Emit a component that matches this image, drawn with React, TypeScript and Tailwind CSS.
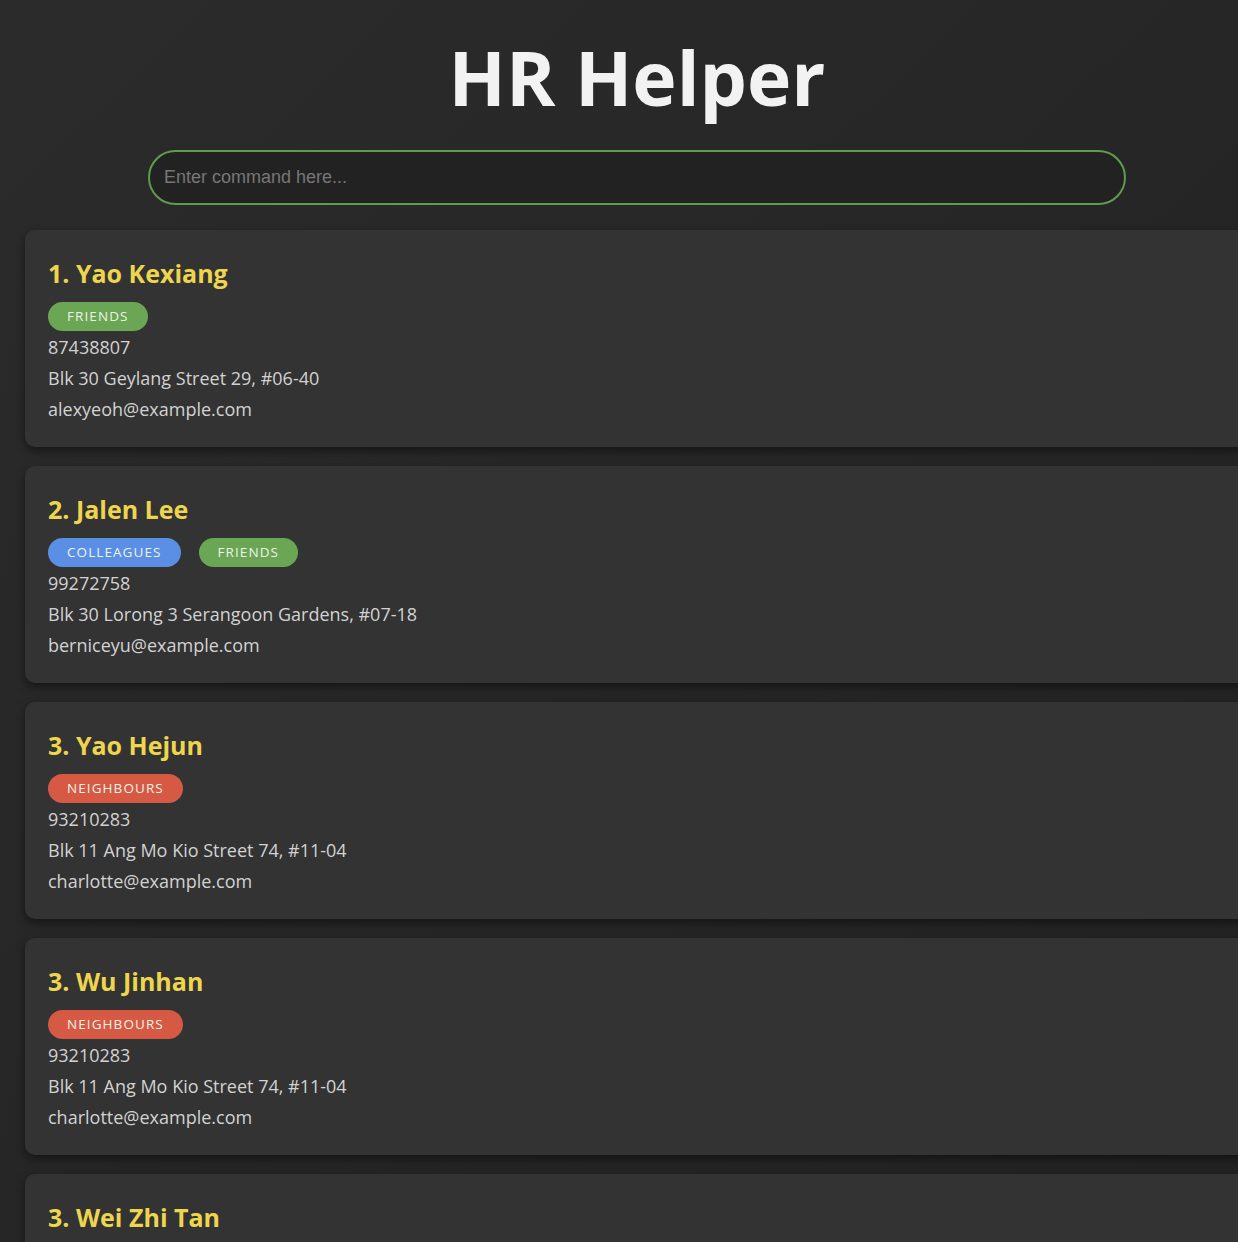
const people = [
  {
    id: 1,
    index: 1,
    name: "Yao Kexiang",
    tags: ["friends"],
    phone: "87438807",
    address: "Blk 30 Geylang Street 29, #06-40",
    email: "alexyeoh@example.com",
  },
  {
    id: 2,
    index: 2,
    name: "Jalen Lee",
    tags: ["colleagues", "friends"],
    phone: "99272758",
    address: "Blk 30 Lorong 3 Serangoon Gardens, #07-18",
    email: "berniceyu@example.com",
  },
  {
    id: 3,
    index: 3,
    name: "Yao Hejun",
    tags: ["neighbours"],
    phone: "93210283",
    address: "Blk 11 Ang Mo Kio Street 74, #11-04",
    email: "charlotte@example.com",
  },
  {
    id: 4,
    index: 3,
    name: "Wu Jinhan",
    tags: ["neighbours"],
    phone: "93210283",
    address: "Blk 11 Ang Mo Kio Street 74, #11-04",
    email: "charlotte@example.com",
  },
  {
    id: 5,
    index: 3,
    name: "Wei Zhi Tan",
    tags: ["neighbours"],
    phone: "93210283",
    address: "Blk 11 Ang Mo Kio Street 74, #11-04",
    email: "charlotte@example.com",
  },
];

const tagColors: Record<string, string> = {
  friends: "bg-[#6aa653]",
  colleagues: "bg-[#5b8fe6]",
  neighbours: "bg-[#d65a43]",
};

function Tag({ label }: { label: string }) {
  return (
    <span
      className={`${tagColors[label]} h-[29px] px-[19px] rounded-full flex items-center text-[13.5px] uppercase tracking-[0.08em] text-[#eef3ea]`}
    >
      {label}
    </span>
  );
}

function PersonCard({ person }: { person: (typeof people)[number] }) {
  return (
    <div className="bg-[#333333] rounded-[10px] shadow-[0_4px_10px_rgba(0,0,0,0.45)] pt-[25px] pb-[22px] px-[23px]">
      <h2 className="text-[25px] leading-[36px] font-bold text-[#eed54e]">
        {person.index}. {person.name}
      </h2>
      <div className="flex flex-row gap-[18px] mt-[11px] mb-[1px]">
        {person.tags.map((t) => (
          <Tag key={t} label={t} />
        ))}
      </div>
      <div className="text-[18px] leading-[31px] text-[#d2d2d2]">
        <p>{person.phone}</p>
        <p>{person.address}</p>
        <p>{person.email}</p>
      </div>
    </div>
  );
}

export default function App() {
  return (
    <div className="h-[1242px] overflow-hidden bg-[#262626]">
      <div
        className="w-[1274px] h-full bg-gradient-to-br from-[#2b2b2b] via-[#262626] to-[#222222]"
        style={{ fontFamily: '"Open Sans", "Noto Sans", sans-serif' }}
      >
        <h1 className="text-center text-[75px] leading-[90px] font-bold text-[#f2f2f2] pt-[32px]">
          HR Helper
        </h1>
        <div className="flex justify-center mt-[28px]">
          <input
            type="text"
            placeholder="Enter command here..."
            className="w-[978px] h-[55px] rounded-full border-2 border-[#5f9c4b] bg-[#222222] px-[14px] text-[18px] text-[#dddddd] placeholder:text-[#777777] outline-none"
            style={{ fontFamily: '"Liberation Sans", Arial, sans-serif' }}
          />
        </div>
        <div className="mx-[25px] mt-[25px] flex flex-col gap-[19px]">
          {people.map((p) => (
            <PersonCard key={p.id} person={p} />
          ))}
        </div>
      </div>
    </div>
  );
}
